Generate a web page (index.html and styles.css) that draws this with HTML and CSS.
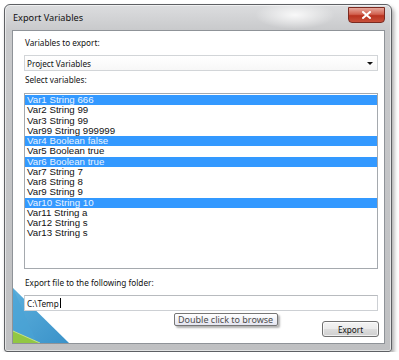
FILE: index.html
```html
<!DOCTYPE html>
<html lang="en">
<head>
<meta charset="UTF-8">
<title>Export Variables</title>
<link rel="stylesheet" href="styles.css">
</head>
<body>
<div class="window">
  <div class="titlebar">
    <span class="title">Export Variables</span>
    <span class="close">
      <svg width="9" height="8" viewBox="0 0 9 8"><path d="M1 1 L8 7 M8 1 L1 7" stroke="#fff" stroke-width="2" stroke-linecap="square"/></svg>
    </span>
  </div>
  <div class="client">
    <svg class="deco" width="60" height="56" viewBox="0 0 60 56">
      <defs>
        <linearGradient id="blue" x1="0" y1="0" x2="1" y2="1">
          <stop offset="0" stop-color="#5cafdc"/>
          <stop offset="1" stop-color="#3a92c9"/>
        </linearGradient>
      </defs>
      <polygon points="0,1 56,56 0,56" fill="url(#blue)"/>
      <polygon points="0,1 24,56 0,56" fill="#4aa4d6" opacity="0.6"/>
      <polygon points="0,44 27,56 0,56" fill="#92c743"/>
      <polyline points="0,44 27,56" stroke="#c4e08a" stroke-width="1" fill="none"/>
    </svg>
    <div class="label first">Variables to export:</div>
    <div class="combo"><span>Project Variables</span><span class="arrow"></span></div>
    <div class="label">Select variables:</div>
    <ul class="list">
      <li class="sel">Var1 String 666</li>
      <li>Var2 String 99</li>
      <li>Var3 String 99</li>
      <li>Var99 String 999999</li>
      <li class="sel">Var4 Boolean false</li>
      <li>Var5 Boolean true</li>
      <li class="sel">Var6 Boolean true</li>
      <li>Var7 String 7</li>
      <li>Var8 String 8</li>
      <li>Var9 String 9</li>
      <li class="sel">Var10 String 10</li>
      <li>Var11 String a</li>
      <li>Var12 String s</li>
      <li>Var13 String s</li>
    </ul>
    <div class="label folder">Export file to the following folder:</div>
    <div class="textbox">C:\Temp<span class="caret"></span></div>
    <div class="buttons"><button class="btn">Export</button></div>
    <div class="tooltip">Double click to browse</div>
  </div>
</div>
</body>
</html>
```
FILE: styles.css
```css
body { margin: 0; background: #fff; font-family: "Noto Sans", "Open Sans", sans-serif; }
.window { box-sizing: border-box; width: 388px; height: 348px; margin: 4px 0 0 4px; padding: 0 6px 7px 7px; border: 1px solid #5e6064; border-radius: 6px 6px 3px 3px; background: radial-gradient(ellipse 40px 14px at 290px 10px, rgba(255,255,255,.85), rgba(255,255,255,0)), linear-gradient(#dcdddf, #c8c9cb 26px, #bfc0c2); box-shadow: inset 0 0 0 1px rgba(255,255,255,.55), 2px 3px 4px rgba(0,0,0,.35); }
.titlebar { display: flex; height: 25px; align-items: center; }
.title { font-size: 9.2px; color: #111; padding-left: 1px; }
.close { margin-left: auto; align-self: flex-start; margin-top: 2px; box-sizing: border-box; width: 37px; height: 16px; display: flex; align-items: center; justify-content: center; border: 1px solid #7a2a20; border-radius: 0 0 4px 4px; background: linear-gradient(#e6a89c, #d2614f 45%, #b9321f 55%, #c8503a); }
.client { position: relative; z-index: 0; box-sizing: border-box; height: 314px; padding: 0 6px 0 11px; background: #fff; border: 1px solid #8f9398; }
.deco { position: absolute; left: 0; bottom: 0; z-index: -1; }
.label { font-size: 8.2px; line-height: 12px; height: 12px; color: #111; margin-top: 3px; padding-left: 1px; }
.label.first { margin-top: 6px; }
.label.folder { margin-top: 8px; }
.combo { box-sizing: border-box; height: 16px; margin-top: 6px; border: 1px solid #d2d5d8; background: linear-gradient(#fff, #f7f7f7); display: flex; align-items: center; justify-content: space-between; padding: 0 4px 0 2px; font-size: 8.2px; color: #111; }
.arrow { width: 0; height: 0; border-left: 3px solid transparent; border-right: 3px solid transparent; border-top: 3px solid #111; }
.list { list-style: none; box-sizing: border-box; height: 176px; margin: 7px 0 0 0; padding: 1px 0 0 0; border: 1px solid #a5a9ae; background: #fff; font-family: "Liberation Sans", Arial, sans-serif; font-size: 9.7px; color: #111; }
.list li { height: 10.27px; line-height: 10.27px; padding-left: 2px; white-space: nowrap; }
.list li.sel { background: #3399ff; color: #eaf4ff; }
.textbox { box-sizing: border-box; height: 16px; margin-top: 6px; border: 1px solid #cdd0d4; border-top-color: #b8bbbf; background: #fff; display: flex; align-items: center; padding-left: 2px; font-size: 8.2px; color: #111; }
.caret { display: inline-block; width: 1px; height: 10px; background: #000; margin-left: 1px; }
.buttons { display: flex; justify-content: flex-end; margin: 10px -1px 0 0; }
.btn { box-sizing: border-box; width: 57px; height: 16px; padding: 0; border: 1px solid #707070; border-radius: 3px; background: linear-gradient(#f4f4f4, #ebebeb 48%, #dddddd 52%, #cfcfcf); box-shadow: inset 0 0 0 1px rgba(255,255,255,.7); font-family: "Noto Sans", sans-serif; font-size: 8.2px; color: #111; }
.tooltip { position: absolute; left: 161px; top: 282px; box-sizing: border-box; width: 104px; height: 13px; padding-left: 3px; border: 1px solid #767676; border-radius: 2px; background: linear-gradient(#ffffff, #e4e5f0); box-shadow: 2px 2px 2px rgba(0,0,0,.3); font-size: 9px; line-height: 11px; color: #4c4c4c; white-space: nowrap; }
```
